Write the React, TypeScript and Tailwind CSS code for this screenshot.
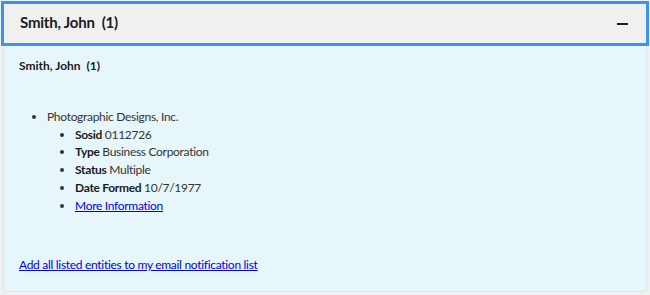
import React from "react";

export default function App() {
  const font = { fontFamily: 'Lato, "Open Sans", sans-serif' };
  return (
    <div className="w-[650px] h-[295px] bg-[#f0f0f0] pt-[1px] px-[1px] text-[#1b1b1b]" style={font}>
      <div className="h-[45px] border-[3px] border-[#3b92f5] bg-[#f0f0f0] flex items-center justify-between pl-[16px] pr-[18px] pb-[2px]">
        <span className="text-[15px] font-bold tracking-[-0.2px] text-[#1b1b1b]">Smith, John&nbsp; (1)</span>
        <span className="block w-[11px] h-[2px] mt-[2px] bg-[#1b1b1b]" />
      </div>
      <div className="mx-[2px] h-[246px] bg-[#e6f6fa] border border-t-0 border-[#d3ebf0] rounded-b-[3px] px-[15px] pt-[11px] text-[12px] leading-[17.75px] tracking-[-0.3px]">
        <div className="font-bold text-[12px] tracking-[0px]">Smith, John&nbsp; (1)</div>
        <ul className="list-disc pl-[28px] mt-[33px] text-[#333]">
          <li>
            Photographic Designs, Inc.
            <ul className="list-disc pl-[28px]">
              <li><b className="text-[#1b1b1b]">Sosid</b> 0112726</li>
              <li><b className="text-[#1b1b1b]">Type</b> Business Corporation</li>
              <li><b className="text-[#1b1b1b]">Status</b> Multiple</li>
              <li><b className="text-[#1b1b1b]">Date Formed</b> 10/7/1977</li>
              <li><a href="#" className="text-[#0000ee] underline">More Information</a></li>
            </ul>
          </li>
        </ul>
        <div className="mt-[42px]">
          <a href="#" className="text-[#0000ee] underline">Add all listed entities to my email notification list</a>
        </div>
      </div>
    </div>
  );
}
